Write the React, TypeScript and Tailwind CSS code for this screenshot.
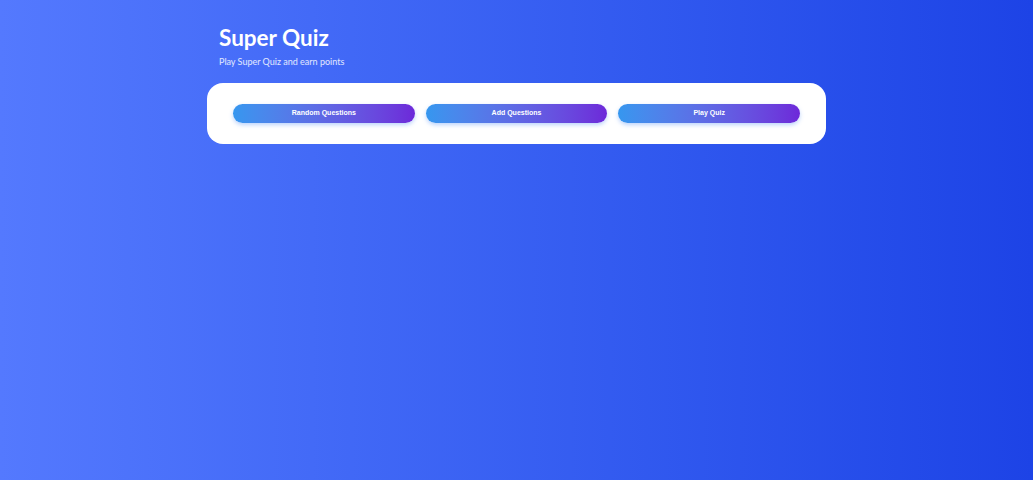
const buttons = ["Random Questions", "Add Questions", "Play Quiz"];

export default function App() {
  return (
    <div className="min-h-screen w-full bg-gradient-to-r from-[#5479fe] to-[#1d43e6] font-['Lato',sans-serif]">
      <div className="w-[619px] mx-auto pt-[22px]">
        <div className="px-3">
          <h1 className="text-[22.5px] font-bold text-white leading-[32px]">Super Quiz</h1>
          <p className="text-[9px] text-white/85 mt-[1px]">Play Super Quiz and earn points</p>
        </div>
        <div className="mt-[14px] bg-white rounded-[16px] h-[61px] px-[26px] flex items-center gap-[11px] pt-[1px]">
          {buttons.map((b) => (
            <button
              key={b}
              className="flex-1 h-[19px] rounded-full bg-gradient-to-r from-[#3597ef] to-[#6d28d9] text-white text-[7px] font-bold font-['Liberation_Sans',sans-serif] shadow-[0_2px_4px_rgba(59,130,246,0.35)]"
            >
              {b}
            </button>
          ))}
        </div>
      </div>
    </div>
  );
}
